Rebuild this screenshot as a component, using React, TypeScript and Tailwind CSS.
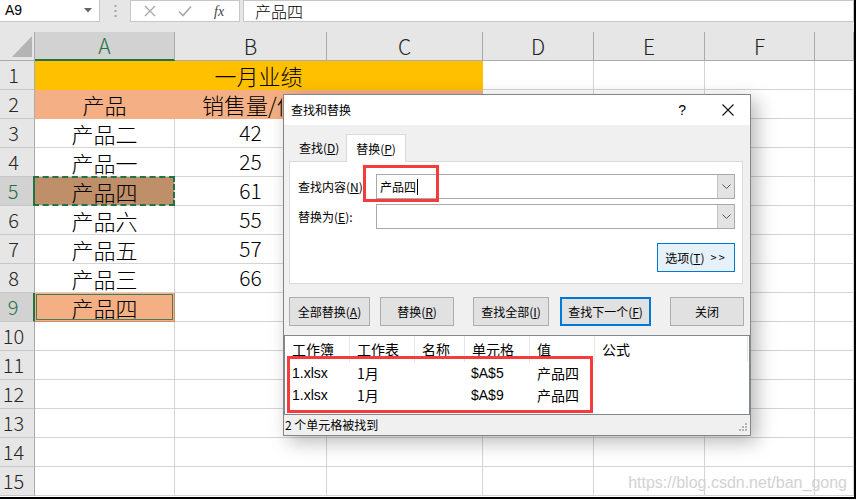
import React from "react";

const CJK = "font-['Noto_Sans_CJK_SC','Noto_Sans',sans-serif]";

function RowHead({ n, sel }: { n: number; sel?: boolean }) {
  return (
    <div
      className={`h-[29px] flex items-center justify-center pr-[7px] text-[20px] font-light leading-none border-b border-b-[#c6c6c6] ${
        sel
          ? "bg-[#d2d2d2] text-[#217346] border-r-2 border-r-[#217346]"
          : "bg-[#e6e6e6] text-[#262626] border-r border-r-[#ababab]"
      }`}
    >
      {n}
    </div>
  );
}

function Cell({
  children,
  cls = "",
  bc = "border-[#d4d4d4]",
}: {
  children?: React.ReactNode;
  cls?: string;
  bc?: string;
}) {
  return (
    <div className={`h-[29px] flex items-center justify-center font-light border-r border-b ${bc} ${cls}`}>
      {children}
    </div>
  );
}

function Blank4() {
  return (
    <>
      <Cell />
      <Cell />
      <Cell />
      <Cell />
    </>
  );
}

const data: [number, string, string][] = [
  [3, "产品二", "42"],
  [4, "产品一", "25"],
  [5, "产品四", "61"],
  [6, "产品六", "55"],
  [7, "产品五", "57"],
  [8, "产品三", "66"],
];

function Btn({ children, w, cls = "" }: { children: React.ReactNode; w: string; cls?: string }) {
  return (
    <div className={`h-[29px] ${w} flex items-center justify-center bg-[#e1e1e1] ${cls}`}>{children}</div>
  );
}

export default function App() {
  return (
    <div className={`relative w-[856px] h-[500px] overflow-hidden bg-white ${CJK} text-black`}>
      <div className="h-[499px] w-[856px] border-r-2 border-b-2 border-black flex flex-col">
        {/* formula bar */}
        <div className="h-[32px] bg-[#e6e6e6] shrink-0">
          <div className="h-[22px] flex">
            <div className="w-[100px] h-[22px] bg-white border-b border-r border-[#c6c6c6] flex items-center pl-[5px] pr-[7px] text-[14px]">
              <span className="font-['Liberation_Sans',sans-serif]">A9</span>
              <svg className="ml-auto" width="8" height="5" viewBox="0 0 8 5">
                <path d="M0 0H8L4 4.5Z" fill="#666" />
              </svg>
            </div>
            <div className="w-[30px] flex items-center justify-center">
              <svg width="3" height="14" viewBox="0 0 3 14">
                <rect x="0.5" y="1" width="2" height="2" fill="#a6a6a6" />
                <rect x="0.5" y="6" width="2" height="2" fill="#a6a6a6" />
                <rect x="0.5" y="11" width="2" height="2" fill="#a6a6a6" />
              </svg>
            </div>
            <div className="w-[110px] h-[22px] bg-white border border-[#c6c6c6] flex items-center">
              <svg className="ml-[13px]" width="12" height="12" viewBox="0 0 12 12">
                <path d="M1 1L11 11M11 1L1 11" stroke="#a8a8a8" strokeWidth="1.3" />
              </svg>
              <svg className="ml-[22px]" width="14" height="12" viewBox="0 0 14 12">
                <path d="M1 6.5L5 10.5L13 1.5" stroke="#a8a8a8" strokeWidth="1.6" fill="none" />
              </svg>
              <span className="ml-[22px] text-[14px] italic font-['Liberation_Serif',serif] text-[#444]">fx</span>
            </div>
            <div className="ml-[3px] flex-1 h-[22px] bg-white border border-[#c6c6c6] flex items-center pl-[11px] text-[16px] font-light leading-none">
              产品四
            </div>
          </div>
        </div>

        {/* grid */}
        <div className="grid grid-cols-[35px_140px_152px_156px_111px_111px_110px_39px]">
          {/* header row */}
          <div className="h-[29px] bg-[#e6e6e6] border-r border-b border-[#ababab] relative">
            <svg className="absolute left-0 top-0" width="35" height="29" viewBox="0 0 35 29">
              <path d="M32 4L32 25L12 25Z" fill="#b4b4b4" />
            </svg>
          </div>
          <div className="h-[29px] bg-[#d2d2d2] border-r border-r-[#ababab] border-b-2 border-b-[#217346] flex items-center justify-center text-[21px] font-light text-[#217346] leading-none">
            A
          </div>
          {["B", "C", "D", "E", "F", ""].map((c, i) => (
            <div
              key={i}
              className="h-[29px] bg-[#e6e6e6] border-r border-b border-[#ababab] flex items-center justify-center text-[21px] font-light leading-none text-[#222]"
            >
              {c}
            </div>
          ))}

          {/* row 1 */}
          <RowHead n={1} />
          <div className="col-span-3 h-[29px] bg-[#ffc000] border-b border-r border-[#ffc000] flex items-center justify-center text-[22px] font-light">
            一月业绩
          </div>
          <Blank4 />

          {/* row 2 */}
          <RowHead n={2} />
          <Cell cls="bg-[#f4b084] text-[22px]" bc="border-[#f4b084]">
            产品
          </Cell>
          <Cell cls="bg-[#f4b084] text-[22px] !justify-start pl-[27px]" bc="border-[#f4b084]">
            <span className="block w-[80px] overflow-hidden whitespace-nowrap">销售量/件</span>
          </Cell>
          <Cell cls="bg-[#f4b084]" bc="border-[#f4b084]" />
          <Blank4 />

          {data.map(([n, name, v]) => (
            <React.Fragment key={n}>
              <RowHead n={n} sel={n === 5} />
              {n === 5 ? (
                <Cell cls="relative bg-[#bf8f6a] text-[22px]">
                  <div className="absolute left-[-2px] top-[-1px] right-[-1px] bottom-[-1px] border-2 border-dashed border-[#217346]" />
                  {name}
                </Cell>
              ) : (
                <Cell cls="text-[22px]">{name}</Cell>
              )}
              <Cell cls="text-[21px]">{v}</Cell>
              <Cell />
              <Blank4 />
            </React.Fragment>
          ))}

          {/* row 9 */}
          <RowHead n={9} sel />
          <Cell cls="relative bg-[#f4b084] text-[22px]" bc="border-[#c8916a]">
            <div className="absolute left-[1px] top-[1px] right-[1px] bottom-[1px] border border-[#4a7a55]" />
            产品四
          </Cell>
          <Cell />
          <Cell />
          <Blank4 />

          {[10, 11, 12, 13, 14, 15].map((n) => (
            <React.Fragment key={n}>
              <RowHead n={n} />
              <Cell />
              <Cell />
              <Cell />
              <Blank4 />
            </React.Fragment>
          ))}
        </div>
      </div>

      {/* dialog */}
      <div className="absolute left-[283px] top-[94px] w-[468px] h-[342px] z-10 flex flex-col border border-[#858585] bg-[#f0f0f0] shadow-[6px_6px_18px_rgba(0,0,0,0.28)] text-[12px] leading-none">
        <div className="h-[30px] shrink-0 bg-white flex items-center pl-[7px]">
          <span>查找和替换</span>
          <span className="ml-auto mr-[36px] text-[14px] font-['Liberation_Sans',sans-serif]">?</span>
          <svg className="mr-[16px]" width="12" height="12" viewBox="0 0 12 12">
            <path d="M0.5 0.5L11.5 11.5M11.5 0.5L0.5 11.5" stroke="#111" strokeWidth="1.1" />
          </svg>
        </div>

        <div className="pt-[9px] pl-[5px] pr-[7px] shrink-0">
          <div className="h-[27px] flex items-end pl-[1px]">
            <div className="h-[26px] w-[56px] flex items-center pl-[9px]">
              查找(<span className="underline">D</span>)
            </div>
            <div className="relative z-10 -mb-px h-[28px] w-[60px] bg-white border border-b-0 border-[#d9d9d9] flex items-center justify-center">
              替换(<span className="underline">P</span>)
            </div>
          </div>
          <div className="h-[123px] bg-white border border-[#d9d9d9] pt-[12px] pl-[8px] pr-[7px] flex flex-col">
            <div className="flex items-center h-[25px]">
              <span className="w-[78px]">
                查找内容(<span className="underline">N</span>):
              </span>
              <div className="flex-1 h-[25px] flex border border-[#a9a9a9] bg-white">
                <div className="flex-1 flex items-center pl-[3px]">
                  产品四
                  <span className="ml-[1px] w-px h-[16px] bg-black" />
                </div>
                <div className="w-[17px] border-l border-[#c4c4c4] bg-[#e3e3e3] flex items-center justify-center">
                  <svg width="9" height="5" viewBox="0 0 9 5">
                    <path d="M0.5 0.5L4.5 4.5L8.5 0.5" stroke="#555" fill="none" />
                  </svg>
                </div>
              </div>
            </div>
            <div className="mt-[5px] flex items-center h-[25px]">
              <span className="w-[78px]">
                替换为(<span className="underline">E</span>):
              </span>
              <div className="flex-1 h-[25px] flex border border-[#a9a9a9] bg-white">
                <div className="flex-1" />
                <div className="w-[17px] border-l border-[#c4c4c4] bg-[#e3e3e3] flex items-center justify-center">
                  <svg width="9" height="5" viewBox="0 0 9 5">
                    <path d="M0.5 0.5L4.5 4.5L8.5 0.5" stroke="#555" fill="none" />
                  </svg>
                </div>
              </div>
            </div>
            <div className="mt-[14px] self-end w-[78px] h-[29px] border border-[#0078d7] bg-[#e5f1fb] flex items-center justify-center">
              选项(<span className="underline">T</span>)<span className="ml-[6px] text-[11px] tracking-[2px]">&gt;&gt;</span>
            </div>
          </div>
        </div>

        <div className="mt-[13px] flex pl-[5px] shrink-0">
          <Btn w="w-[81px]" cls="border border-[#adadad]">
            全部替换(<span className="underline">A</span>)
          </Btn>
          <Btn w="w-[74px] ml-[10px]" cls="border border-[#adadad]">
            替换(<span className="underline">R</span>)
          </Btn>
          <Btn w="w-[76px] ml-[19px]" cls="border border-[#adadad]">
            查找全部(<span className="underline">I</span>)
          </Btn>
          <Btn w="w-[91px] ml-[11px]" cls="border-2 border-[#0078d7]">
            查找下一个(<span className="underline">F</span>)
          </Btn>
          <Btn w="w-[74px] ml-[19px]" cls="border border-[#adadad]">
            关闭
          </Btn>
        </div>

        <div className="mt-[9px] h-[80px] shrink-0 bg-white border border-[#828790] text-[14px]">
          <div className="h-[26px] flex">
            {[
              ["工作簿", "w-[65px]"],
              ["工作表", "w-[65px]"],
              ["名称", "w-[50px]"],
              ["单元格", "w-[65px]"],
              ["值", "w-[65px]"],
              ["公式", "w-[153px]"],
            ].map(([t, w]) => (
              <div key={t} className={`${w} h-[26px] pl-[7px] flex items-center border-r border-[#e5e5e5]`}>
                {t}
              </div>
            ))}
          </div>
          {[["$A$5"], ["$A$9"]].map(([c]) => (
            <div key={c} className="h-[22px] flex items-center">
              <span className="w-[65px] pl-[7px] font-['Liberation_Sans',sans-serif]">1.xlsx</span>
              <span className="w-[65px] pl-[7px]">1月</span>
              <span className="w-[50px]" />
              <span className="w-[65px] pl-[6px] font-['Liberation_Sans',sans-serif]">{c}</span>
              <span className="w-[65px] pl-[7px]">产品四</span>
            </div>
          ))}
        </div>

        <div className="flex-1 relative flex items-center pl-[1px]">
          2 个单元格被找到
          <svg className="absolute right-[2px] bottom-[2px]" width="10" height="10" viewBox="0 0 10 10">
            <rect x="7" y="0" width="2" height="2" fill="#b5b5b5" />
            <rect x="4" y="3" width="2" height="2" fill="#b5b5b5" />
            <rect x="7" y="3" width="2" height="2" fill="#b5b5b5" />
            <rect x="1" y="6" width="2" height="2" fill="#b5b5b5" />
            <rect x="4" y="6" width="2" height="2" fill="#b5b5b5" />
            <rect x="7" y="6" width="2" height="2" fill="#b5b5b5" />
          </svg>
        </div>
      </div>

      {/* red annotation boxes */}
      <div className="absolute z-20 left-[363px] top-[165px] w-[76px] h-[37px] border-[3px] border-[#f53c3c]" />
      <div className="absolute z-20 left-[287px] top-[356px] w-[306px] h-[57px] border-[3px] border-[#f53c3c]" />

      {/* watermark */}
      <div className="absolute z-20 right-[9px] top-[475px] text-[16px] leading-none text-[#d2d2d2] font-['Liberation_Sans',sans-serif]">
        https://blog.csdn.net/ban_gong
      </div>
    </div>
  );
}
